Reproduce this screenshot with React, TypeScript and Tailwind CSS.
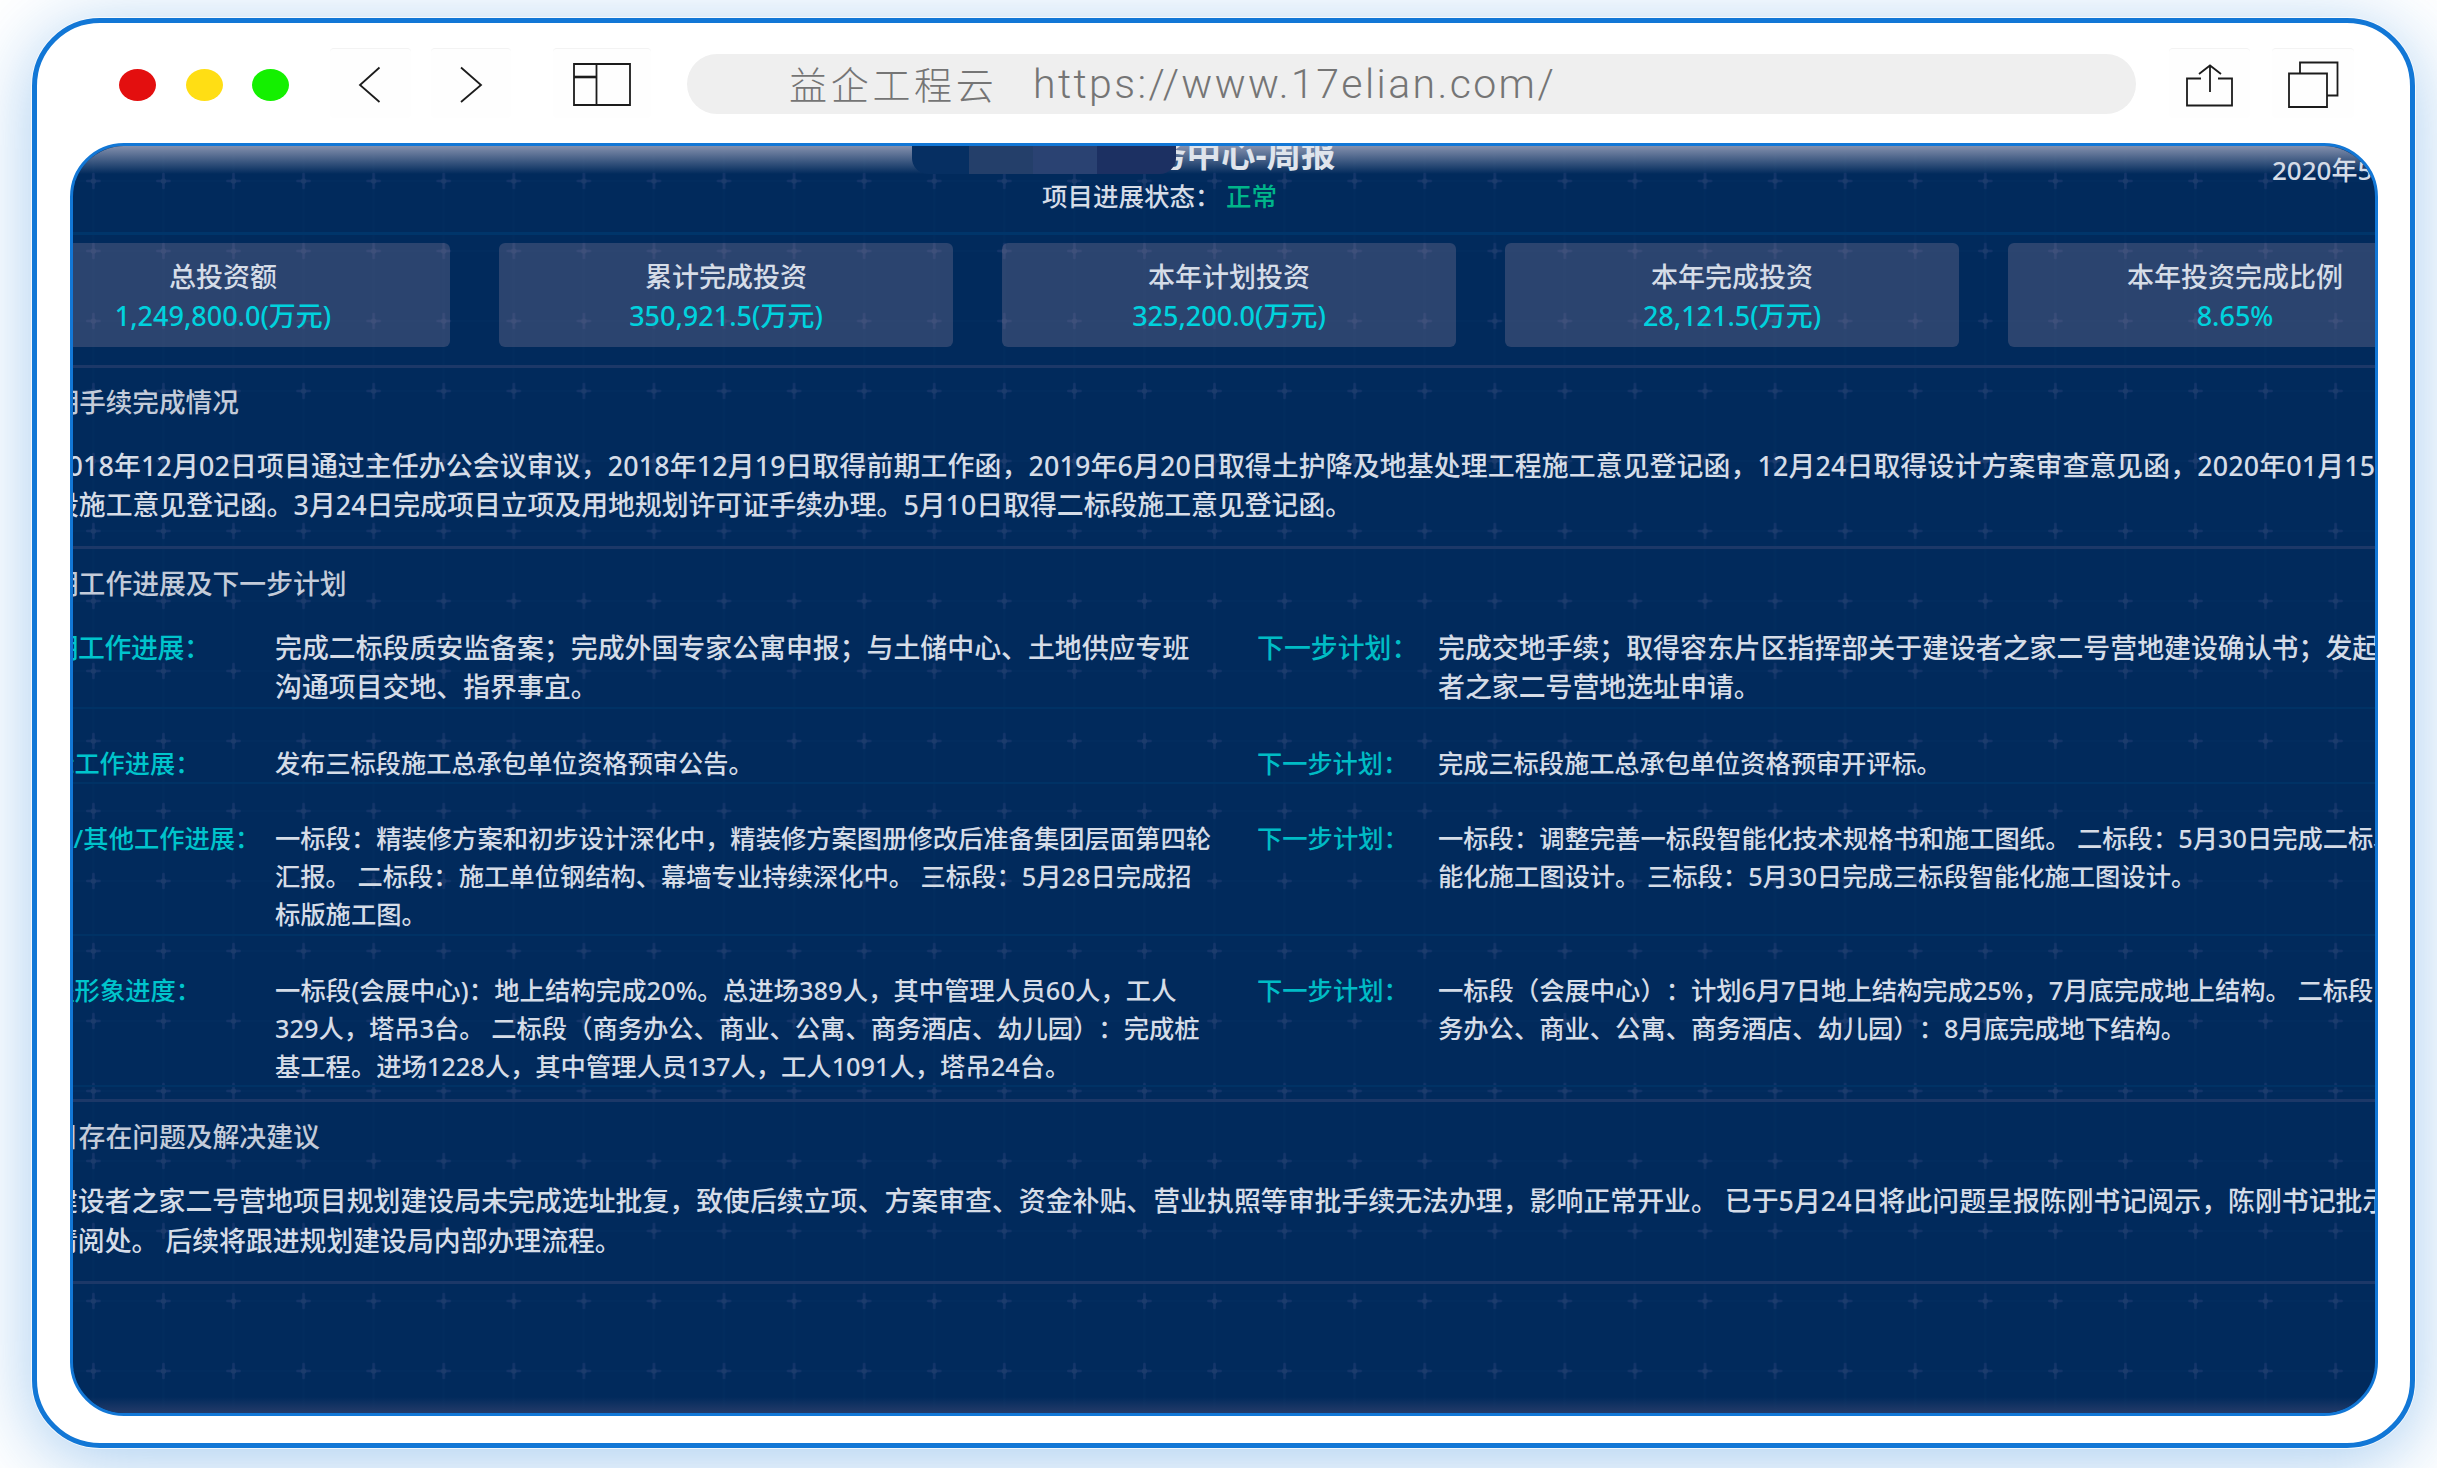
import React from "react";

/* ── Report data ── */
const stats = [
  { label: "总投资额", value: "1,249,800.0(万元)" },
  { label: "累计完成投资", value: "350,921.5(万元)" },
  { label: "本年计划投资", value: "325,200.0(万元)" },
  { label: "本年完成投资", value: "28,121.5(万元)" },
  { label: "本年投资完成比例", value: "8.65%" },
];

const procedureLines = [
  "2018年12月02日项目通过主任办公会议审议，2018年12月19日取得前期工作函，2019年6月20日取得土护降及地基处理工程施工意见登记函，12月24日取得设计方案审查意见函，2020年01月15日取得",
  "段施工意见登记函。3月24日完成项目立项及用地规划许可证手续办理。5月10日取得二标段施工意见登记函。",
];

const issueLines = [
  "建设者之家二号营地项目规划建设局未完成选址批复，致使后续立项、方案审查、资金补贴、营业执照等审批手续无法办理，影响正常开业。 已于5月24日将此问题呈报陈刚书记阅示，陈刚书记批示",
  "请阅处。 后续将跟进规划建设局内部办理流程。",
];

interface WorkRow {
  label: string;
  box: string;
  labelBox: string;
  doneBox?: string;
  done: string[];
  next: string[];
}

const workRows: WorkRow[] = [
  {
    label: "前期工作进展：",
    box: "h-[81px] text-[26.9px] leading-[39px]",
    labelBox: "-ml-[25px] w-[250px] tracking-[-0.4px]",
    done: [
      "完成二标段质安监备案；完成外国专家公寓申报；与土储中心、土地供应专班",
      "沟通项目交地、指界事宜。",
    ],
    next: [
      "完成交地手续；取得容东片区指挥部关于建设者之家二号营地建设确认书；发起建设",
      "者之家二号营地选址申请。",
    ],
  },
  {
    label: "招标工作进展：",
    box: "h-[75px] pt-[35px] text-[25.2px] leading-[38px]",
    labelBox: "-ml-[26px] w-[251px]",
    done: ["发布三标段施工总承包单位资格预审公告。"],
    next: ["完成三标段施工总承包单位资格预审开评标。"],
  },
  {
    label: "设计/其他工作进展：",
    box: "h-[152px] pt-[35px] text-[25.3px] leading-[38px]",
    labelBox: "-ml-[27px] w-[252px]",
    done: [
      "一标段：精装修方案和初步设计深化中，精装修方案图册修改后准备集团层面第四轮",
      "汇报。 二标段：施工单位钢结构、幕墙专业持续深化中。 三标段：5月28日完成招",
      "标版施工图。",
    ],
    next: [
      "一标段：调整完善一标段智能化技术规格书和施工图纸。 二标段：5月30日完成二标段智",
      "能化施工图设计。 三标段：5月30日完成三标段智能化施工图设计。",
    ],
  },
  {
    label: "工程形象进度：",
    box: "h-[151px] pt-[35px] text-[25.3px] leading-[38px]",
    labelBox: "-ml-[26px] w-[251px]",
    doneBox: "[&>p:first-child]:tracking-[0.1px]",
    done: [
      "一标段(会展中心)：地上结构完成20%。总进场389人，其中管理人员60人，工人",
      "329人，塔吊3台。 二标段（商务办公、商业、公寓、商务酒店、幼儿园）：完成桩",
      "基工程。进场1228人，其中管理人员137人，工人1091人，塔吊24台。",
    ],
    next: [
      "一标段（会展中心）：计划6月7日地上结构完成25%，7月底完成地上结构。 二标段（商",
      "务办公、商业、公寓、商务酒店、幼儿园）：8月底完成地下结构。",
    ],
  },
];

/* ── Browser toolbar ── */
function Tile({
  width,
  className = "",
  children,
}: {
  width: number;
  className?: string;
  children: React.ReactNode;
}) {
  return (
    <div className={`h-[70px] shrink-0 rounded-sm border-t border-[#f3f3f3] bg-[#fefefe] ${className}`}>
      <svg
        width={width}
        height={70}
        viewBox={`0 0 ${width} 70`}
        fill="none"
        stroke="#1c1c1c"
        strokeWidth={1.8}
        className="-mt-px block"
      >
        {children}
      </svg>
    </div>
  );
}

function Toolbar() {
  return (
    <div className="flex h-[120px] items-center pl-[82px]">
      <div className="mt-1 flex gap-[29.500px]">
        <span className="h-8 w-[37px] rounded-[50%] bg-[#e30f0f]" />
        <span className="h-8 w-[37px] rounded-[50%] bg-[#ffde14]" />
        <span className="h-8 w-[37px] rounded-[50%] bg-[#14f000]" />
      </div>

      <Tile width={81} className="ml-[41px]">
        <path d="M49.5 19.5 30 37l19.500 17" />
      </Tile>
      <Tile width={80} className="ml-5">
        <path d="M30 19.500 50 37 30 54" />
      </Tile>
      <Tile width={98} className="ml-[42px]">
        <path d="M21 16h56v41H21zM43.500 16v41" />
        <path d="M21 29h22.500" strokeWidth={2.6} />
      </Tile>

      <div className="ml-9 mt-0.5 flex h-[60px] w-[1449px] shrink-0 items-center rounded-full bg-[#efefef] pl-[102px] text-[#757575]">
        <span className="-mt-1 w-[244px] whitespace-nowrap font-['Noto_Sans_CJK_SC',sans-serif] text-[38px] font-light tracking-[3.7px]">
          益企工程云
        </span>
        <span className="mt-0.5 whitespace-nowrap font-[Roboto,sans-serif] text-[41px] font-light tracking-[2.4px]">
          https://www.17elian.com/
        </span>
      </div>

      <Tile width={81} className="ml-[33px]">
        <path d="M32 30.500H18V57.500h45V30.500H49M41 44V17.500M30 26 41 17.500 52 26" />
      </Tile>
      <Tile width={82} className="ml-[22px]">
        <path d="M17 25.500h38V59H17zM28 25V14.500h37.500v33H55" />
      </Tile>
    </div>
  );
}

/* ── Dashboard ── */
function GridBackdrop() {
  return (
    <svg className="absolute inset-0 h-full w-full" aria-hidden="true">
      <defs>
        <pattern id="cross" x="-14.600" y="0" width="70.070" height="70" patternUnits="userSpaceOnUse">
          <path d="M35 0v70M0 35h70.070" stroke="#022c5e" strokeWidth="2" />
          <path d="M35 28v14M29 35h12" stroke="#14356a" strokeWidth="2.600" strokeLinecap="round" />
          <circle cx="35" cy="35" r="2.600" fill="#1c3c6c" />
        </pattern>
      </defs>
      <rect width="100%" height="100%" fill="url(#cross)" />
    </svg>
  );
}

function Lines({ items }: { items: string[] }) {
  return (
    <>
      {items.map((line) => (
        <p key={line} className="whitespace-nowrap">
          {line}
        </p>
      ))}
    </>
  );
}

function Header() {
  return (
    <header className="flex h-[86px]">
      <div className="ml-[862px]">
        <div className="-mt-[12px] flex h-10 items-center">
          <span className="z-10 flex h-10 w-[264px] overflow-hidden rounded-b-2xl">
            <i className="w-[57px] bg-[#062f62]" />
            <i className="w-16 bg-[#243f6a]" />
            <i className="w-16 bg-[#2a4272]" />
            <i className="flex-1 bg-[#1c3062]" />
          </span>
          <h1 className="-ml-6 whitespace-nowrap text-[34.500px] font-bold leading-10 text-[#dfe4ec]">
            务中心-周报
          </h1>
        </div>
        <p className="ml-[130px] mt-[3px] flex text-[25.500px] leading-[38px]">
          <span className="w-[184px] whitespace-nowrap">项目进展状态：</span>
          <span className="text-[#00b58a]">正常</span>
        </p>
      </div>
      <time className="ml-auto mr-[110px] mt-[5px] w-[90px] whitespace-nowrap text-[26px] leading-[38px]">2020年5月</time>
    </header>
  );
}

function Dashboard() {
  return (
    <main className="relative ml-[33px] h-[1273px] w-[2308px] overflow-hidden rounded-[54px] border-[3px] border-[#1277d6] bg-[#012a5c]">
      <GridBackdrop />
      <div className="absolute inset-x-0 top-0 h-7 bg-linear-to-b from-[#8490ad] to-transparent" />
      <div className="absolute inset-x-0 bottom-0 h-4 bg-linear-to-t from-[#243b69] to-transparent" />

      <div
        lang="zh-CN"
        className="relative -ml-[23px] w-[2422px] font-['Noto_Sans','Noto_Sans_CJK_SC',sans-serif] font-medium text-[#d5dce7] [text-spacing-trim:space-all]"
      >
        <Header />

        {/* Stat cards */}
        <div className="h-[133px] border-t-[3px] border-[#00356a] pt-2">
          <div className="-ml-[54px] flex gap-[49px]">
            {stats.map((s) => (
              <div
                key={s.label}
                className="flex h-[104px] w-[454px] shrink-0 flex-col items-center rounded-md bg-[#8f829a]/30 pt-[14px]"
              >
                <span className="text-[27px] leading-10">{s.label}</span>
                <span className="text-[27px] leading-[38px] text-[#00d2de]">{s.value}</span>
              </div>
            ))}
          </div>
        </div>

        {/* Procedures */}
        <section className="h-[181px] border-t-[3px] border-[#1c3868] pt-[14px]">
          <h2 className="-ml-[24px] text-[26.600px] leading-10 text-[#c3cbd9]">前期手续完成情况</h2>
          <div className="ml-[2px] mt-6 text-[26.850px] leading-[39.300px] [&>p:first-child]:tracking-[0.14px]">
            <Lines items={procedureLines} />
          </div>
        </section>

        {/* Progress and next steps */}
        <section className="h-[553px] border-t-[3px] border-[#1c3868] pt-[15px]">
          <h2 className="-ml-[25px] text-[26.800px] leading-10 text-[#c3cbd9]">近期工作进展及下一步计划</h2>
          <div className="mt-6">
            {workRows.map((row) => (
              <div key={row.label} className={`flex border-b-2 border-[#003265] ${row.box}`}>
                <span className={`shrink-0 whitespace-nowrap text-[#00c4cc] ${row.labelBox}`}>{row.label}</span>
                <div className={`w-[982px] shrink-0 ${row.doneBox ?? ""}`}>
                  <Lines items={row.done} />
                </div>
                <span className="w-[181px] shrink-0 whitespace-nowrap text-[#00bcc5]">下一步计划：</span>
                <div>
                  <Lines items={row.next} />
                </div>
              </div>
            ))}
          </div>
        </section>

        {/* Open issues */}
        <section className="h-[185px] border-y-[3px] border-[#1c3868] pt-[15px]">
          <h2 className="-ml-[25px] text-[26.800px] leading-10 text-[#c3cbd9]">项目存在问题及解决建议</h2>
          <div className="ml-[1px] mt-6 text-[26.850px] leading-[39.500px] [&>p:first-child]:tracking-[0.04px]">
            <Lines items={issueLines} />
          </div>
        </section>
      </div>
    </main>
  );
}

export default function App() {
  return (
    <div className="h-[1468px] w-[2437px] overflow-hidden bg-white pl-8 pt-[18px]">
      <div className="h-[1430px] w-[2383px] rounded-[68px] border-[5px] border-[#1277d6] bg-white shadow-[0_0_0_1px_rgba(255,255,255,0.7),0_12px_76px_rgba(18,119,214,0.38)]">
        <Toolbar />
        <Dashboard />
      </div>
    </div>
  );
}
